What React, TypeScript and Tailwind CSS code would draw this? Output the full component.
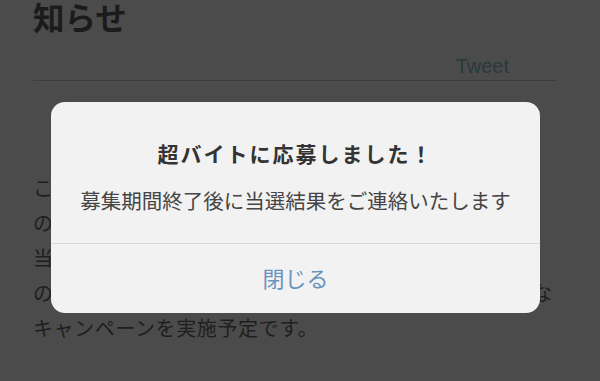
import React from "react";

export default function App() {
  const jp = { fontFamily: '"Noto Sans CJK JP", "Noto Sans", sans-serif' };
  return (
    <div className="relative w-[600px] h-[381px] overflow-hidden bg-[#4b4b4b]" style={jp}>
      <div className="ml-[33px] w-[524px]">
        <h1 className="mt-[-2px] text-[31.5px] leading-[36px] font-bold text-[#1b1b1b]">知らせ</h1>
        <div
          className="mt-[20px] pr-[48px] text-right text-[20px] leading-[24px] text-[#2a3939]"
          style={{ fontFamily: '"Liberation Sans", Arial, sans-serif' }}
        >
          Tweet
        </div>
        <div className="mt-[2px] border-t border-[#3d3d3d]" />
        <div className="mt-[89px] text-[20px] leading-[35px] text-[#1e1e1e] whitespace-nowrap">
          <p>このキャンペーンは期間限定で開催しております。</p>
          <p>のご応募は締め切らせていただきました。</p>
          <p>当選者の方にはメールにてご連絡いたします。</p>
          <p>の後も超バイトでは皆様に楽しんでいただけるよう様々な</p>
          <p className="tracking-[0.6px]">キャンペーンを実施予定です。</p>
        </div>
      </div>

      <div className="absolute left-[51px] top-[102px] w-[489px] rounded-[14px] bg-[#f2f2f2] text-center">
        <div className="pt-[37px] text-[21px] leading-[28px] font-bold tracking-[2px] text-[#333333]">
          超バイトに応募しました！
        </div>
        <div className="mt-[19px] pb-[29px] text-[20.5px] leading-[28px] text-[#454545]">
          募集期間終了後に当選結果をご連絡いたします
        </div>
        <div className="border-t border-[#d9d9d9]" />
        <div className="flex h-[69px] items-center justify-center pb-[2px] text-[22px] text-[#6a93be]">
          閉じる
        </div>
      </div>
    </div>
  );
}
